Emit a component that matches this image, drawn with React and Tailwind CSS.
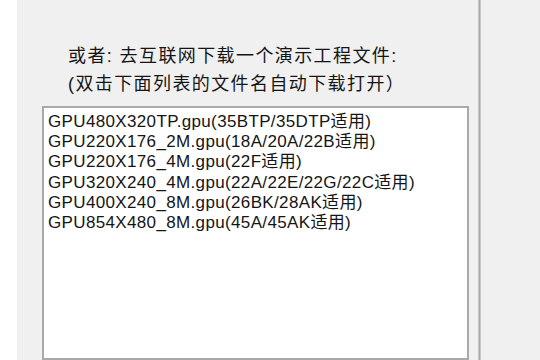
export default function App() {
  const files = [
    "GPU480X320TP.gpu(35BTP/35DTP适用)",
    "GPU220X176_2M.gpu(18A/20A/22B适用)",
    "GPU220X176_4M.gpu(22F适用)",
    "GPU320X240_4M.gpu(22A/22E/22G/22C适用)",
    "GPU400X240_8M.gpu(26BK/28AK适用)",
    "GPU854X480_8M.gpu(45A/45AK适用)",
  ];
  const font = { fontFamily: '"Liberation Sans", "Noto Sans CJK SC", sans-serif' };
  return (
    <div className="flex h-[360px] w-[540px] overflow-hidden bg-white text-[#151515]" style={font}>
      <div className="w-[17px] shrink-0 bg-white" />
      <div className="flex w-[461px] shrink-0 flex-col bg-[#f0f0f0] pl-[25px] pr-[9px] pt-[42px]">
        <div className="pl-[26px] text-[18px] leading-[28px] tracking-[1.4px]">
          <div>或者: 去互联网下载一个演示工程文件:</div>
          <div>(双击下面列表的文件名自动下载打开）</div>
        </div>
        <div className="mt-[8px] flex-1 border-2 border-[#a9a9a9] bg-white pl-[4px] pt-[4px] text-[17px] leading-[20.2px] tracking-[0.35px]">
          {files.map((f) => (
            <div key={f}>{f}</div>
          ))}
        </div>
      </div>
      <div className="w-[3px] shrink-0 border-x border-[#c8c8c8] bg-[#a8a8a8]" />
      <div className="flex-1 bg-[#f0f0f0]" />
    </div>
  );
}
